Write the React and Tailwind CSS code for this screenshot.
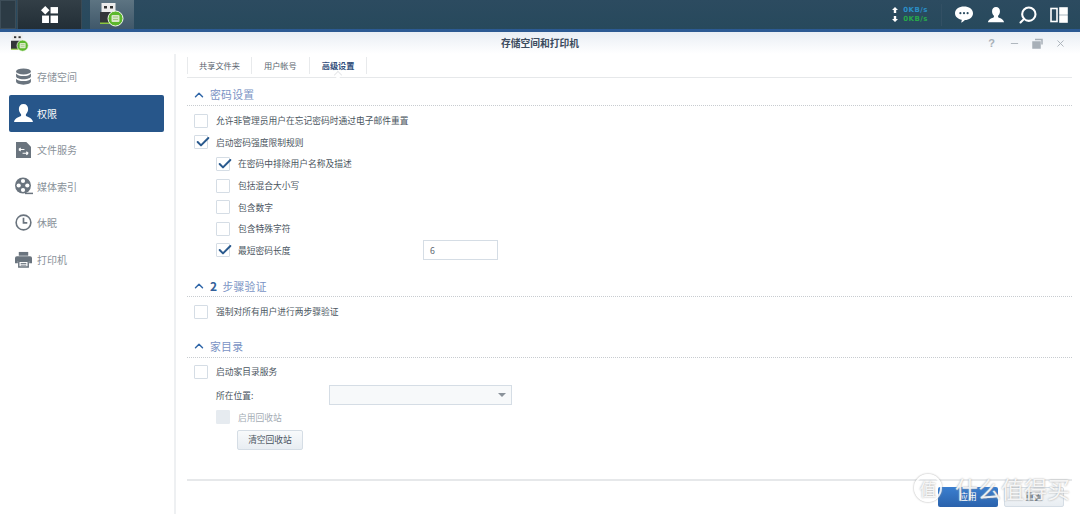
import { Check, ChevronUp, Minus, X, Search } from 'lucide-react'

const font = { fontFamily: '"Noto Sans CJK SC", "Noto Sans", sans-serif' }

function UsbIcon({ small }) {
  const cls = small ? 'w-[18px] h-[18px]' : 'w-[24px] h-[24px]'
  return (
    <svg viewBox="0 0 24 24" className={cls}>
      <rect x="1.500" y="0" width="14" height="9" fill="#ececec" />
      <rect x="4" y="3" width="3" height="2.500" fill="#333" />
      <rect x="10" y="3" width="3" height="2.500" fill="#333" />
      <rect x="0" y="9" width="16" height="11" fill="#33363a" />
      <rect x="0" y="19.500" width="16" height="1.500" fill="#8cc63f" />
      <circle cx="15.500" cy="15.500" r="7.500" fill="#5cb82c" stroke="#f4f8ef" strokeWidth="1" />
      <rect x="11.500" y="12" width="8" height="7" rx="1" fill="#d9e8c8" />
      <path d="M13 14h5M13 16.500h5" stroke="#8fbf6a" strokeWidth="0.800" />
    </svg>
  )
}

function Disk({ className }) {
  return (
    <svg viewBox="0 0 16 16" className={className} fill="currentColor">
      <ellipse cx="8" cy="3.200" rx="7" ry="2.800" />
      <path d="M1 5.200c1 1.600 3.600 2.400 7 2.400s6-.8 7-2.400v2.600c0 1.500-3 2.800-7 2.800s-7-1.300-7-2.800z" />
      <path d="M1 10c1 1.600 3.600 2.300 7 2.300s6-.7 7-2.300v2.800c0 1.500-3 2.900-7 2.900s-7-1.400-7-2.900z" />
    </svg>
  )
}

function Person({ className }) {
  return (
    <svg viewBox="0 0 20 20" className={className} fill="currentColor">
      <path d="M10 1c2.800 0 4.400 2 4.400 4.800 0 2.200-1 4-2.100 5v1.600c1.600.9 6.200 1.800 6.700 5.600H1c.5-3.800 5.100-4.700 6.700-5.600v-1.600c-1.100-1-2.100-2.800-2.100-5C5.600 3 7.200 1 10 1z" />
    </svg>
  )
}

function FileSvc({ className }) {
  return (
    <svg viewBox="0 0 16 18" className={className}>
      <path d="M0 1h11l5 5v12H0z" fill="currentColor" />
      <path d="M3 9h6M3 9l2-1.500M3 9l2 1.500M13 13H7M13 13l-2-1.500M13 13l-2 1.500" stroke="#fff" strokeWidth="1.300" fill="none" />
    </svg>
  )
}

function Reel({ className }) {
  return (
    <svg viewBox="0 0 18 18" className={className}>
      <circle cx="8" cy="8.500" r="8" fill="currentColor" />
      <circle cx="8" cy="4" r="2.100" fill="#fff" />
      <circle cx="8" cy="13" r="2.100" fill="#fff" />
      <circle cx="3.700" cy="8.500" r="2.100" fill="#fff" />
      <circle cx="12.300" cy="8.500" r="2.100" fill="#fff" />
      <path d="M10 16.400h8" stroke="currentColor" strokeWidth="1.500" />
    </svg>
  )
}

function Clock({ className }) {
  return (
    <svg viewBox="0 0 18 18" className={className} fill="none" stroke="currentColor">
      <circle cx="9" cy="9" r="7.800" strokeWidth="1.700" />
      <path d="M9 4v5.500h4" strokeWidth="1.800" />
    </svg>
  )
}

function Printer({ className }) {
  return (
    <svg viewBox="0 0 18 18" className={className}>
      <path d="M4 1h10v4H4z" fill="currentColor" />
      <path d="M2 5.500h14a2 2 0 0 1 2 2V13h-3v-2.500H3V13H0V7.500a2 2 0 0 1 2-2z" fill="currentColor" />
      <path d="M4 11h10v6H4z" fill="none" stroke="currentColor" strokeWidth="1.500" />
      <path d="M6 13.200h6M6 15h6" stroke="currentColor" />
    </svg>
  )
}

function Arrow({ down }) {
  return (
    <svg viewBox="0 0 6 6" className={`w-[6px] h-[6px] mr-[5px] ${down ? 'rotate-180' : ''}`} fill="#fff">
      <path d="M3 0l3 3H4.200v3H1.800V3H0z" />
    </svg>
  )
}

const menu = [
  ['存储空间', Disk, 'w-[17px] h-[17px]'],
  ['权限', Person, 'w-[21px] h-[21px]'],
  ['文件服务', FileSvc, 'w-[15px] h-[17px]'],
  ['媒体索引', Reel, 'w-[18px] h-[18px]'],
  ['休眠', Clock, 'w-[17px] h-[17px]'],
  ['打印机', Printer, 'w-[17px] h-[17px]'],
]

function Box({ checked, disabled }) {
  return (
    <span className={`relative w-[14px] h-[14px] shrink-0 border rounded-[1px] ${disabled ? 'bg-[#e6ebf0] border-[#e6ebf0]' : 'bg-white border-[#d5dde5]'}`}>
      {checked && <Check size={16} strokeWidth={3} className="absolute -top-[2px] left-0 text-[#2a5a8e]" />}
    </span>
  )
}

function Row({ label, checked, sub, disabled }) {
  return (
    <div className={`h-[21.6px] flex items-center gap-2 ${sub ? 'pl-[22px]' : ''}`}>
      <Box checked={checked} disabled={disabled} />
      <span className={disabled ? 'text-[#a4acb4]' : 'text-[#4a5560]'}>{label}</span>
    </div>
  )
}

function SectionHead({ children }) {
  return (
    <div className="h-[22px] flex items-center gap-[4px] pl-[5px] border-b border-dotted border-[#c8ccd0]">
      <ChevronUp size={14} strokeWidth={2.500} className="text-[#2f66a8]" />
      <span className="text-[10.8px] text-[#7a93c4] tracking-[0.3px]">{children}</span>
    </div>
  )
}

export default function App() {
  return (
    <div style={font} className="relative w-[1080px] h-[514px] overflow-hidden bg-white flex flex-col">
      {/* taskbar */}
      <div className="h-[32px] shrink-0 flex items-stretch bg-gradient-to-b from-[#2c4b60] to-[#27495c] border-b-[3px] border-[#2c5a93]">
        <div className="w-[16px] bg-[#2c3b45] border border-[#3d4d58]" />
        <div className="w-[65px] ml-px bg-gradient-to-b from-[#333f47] to-[#222e36] border-x border-[#3a4a55] flex items-center justify-center">
          <svg viewBox="0 0 16 16" className="w-[17px] h-[17px]" fill="#fff">
            <path d="M4 0l4 4-4 4-4-4z" />
            <rect x="9" y="1" width="7" height="6" />
            <rect x="1" y="9" width="6.500" height="7" />
            <rect x="9" y="9" width="7" height="7" />
          </svg>
        </div>
        <div className="w-[44px] ml-[8px] bg-gradient-to-b from-[#5d7482] to-[#40586a] flex items-center justify-center">
          <UsbIcon />
        </div>
        <div className="ml-auto flex items-center text-white">
          <div className="flex flex-col text-[7px] leading-[9px] font-bold tracking-[0.5px] mr-[13px]" style={{ fontFamily: '"DejaVu Sans", sans-serif' }}>
            <span className="flex items-center text-[#2a8fc8]"><Arrow />0KB/s</span>
            <span className="flex items-center text-[#27a84a]"><Arrow down />0KB/s</span>
          </div>
          <div className="w-px h-[22px] bg-[#335064] mr-[13px]" />
          <svg viewBox="0 0 20 18" className="w-[18px] h-[17px] mr-[14px]" fill="#fff">
            <path d="M10 0c5.500 0 10 3 10 7.500S15.500 15 11 15c-1 1.300-2.500 2.500-4.500 3 .8-1 1-2 1-3.300C3.500 14 0 11.500 0 7.500 0 3 4.500 0 10 0z" />
            <circle cx="6" cy="7.500" r="1.200" fill="#2b4b60" />
            <circle cx="10" cy="7.500" r="1.200" fill="#2b4b60" />
            <circle cx="14" cy="7.500" r="1.200" fill="#2b4b60" />
          </svg>
          <Person className="w-[18px] h-[18px] mr-[13px]" />
          <Search size={20} strokeWidth={2.500} className="mr-[12px] -scale-x-100" />
          <svg viewBox="0 0 18 16" className="w-[18px] h-[16px] mr-[12px]" fill="none" stroke="#fff" strokeWidth="1.600">
            <rect x="1" y="1.500" width="6" height="13" />
            <rect x="10" y="1" width="7" height="6" fill="#fff" />
            <rect x="10" y="9" width="7" height="6" fill="#fff" />
          </svg>
        </div>
      </div>

      {/* window title */}
      <div className="relative h-[22px] shrink-0 flex items-center justify-center bg-gradient-to-b from-[#e9eef4] to-white">
        <span className="absolute left-[11px] top-[2px]"><UsbIcon small /></span>
        <span className="text-[9.75px] font-bold text-[#3b4b5e]">存储空间和打印机</span>
        <div className="absolute right-[14px] top-[6px] flex items-center gap-[12px] text-[#a8b0b8]">
          <span className="w-[11px] text-[11px] leading-[11px] font-bold text-center" style={{ fontFamily: '"Liberation Sans", sans-serif' }}>?</span>
          <Minus size={11} strokeWidth={2} />
          <svg viewBox="0 0 11 11" className="w-[11px] h-[11px]" fill="none" stroke="currentColor" strokeWidth="1.500">
            <rect x="1" y="4" width="7" height="6" fill="currentColor" />
            <path d="M3 1.500h7v5" />
          </svg>
          <X size={11} strokeWidth={2} />
        </div>
      </div>

      <div className="flex-1 flex min-h-0">
        {/* sidebar */}
        <div className="w-[176px] shrink-0 border-r-2 border-[#eef0f2] pl-[9px] pr-[10px] pt-[4.5px]">
          {menu.map(([label, Icon, cls]) => {
            const active = label === '权限'
            return (
              <div key={label} className={`h-[36.5px] flex items-center rounded-[2px] ${active ? 'bg-[#27568a] text-white' : 'text-[#6a747e]'}`}>
                <span className="w-[28px] flex justify-center shrink-0 pl-px">
                  <Icon className={cls} />
                </span>
                <span className={`text-[10px] ${active ? 'text-white' : 'text-[#8a929a]'}`}>{label}</span>
              </div>
            )
          })}
        </div>

        {/* main */}
        <div className="flex-1 min-w-0 flex flex-col pl-[11px] pr-[8px] text-[8.75px]">
          <div className="relative h-[24px] shrink-0 flex items-center border-b border-[#e6e8ea] text-[8.2px] text-[#5a646e]">
            <span className="h-[17px] flex items-center px-[11px] border-l border-[#e8eaec]">共享文件夹</span>
            <span className="h-[17px] flex items-center px-[12px] border-l border-[#e8eaec]">用户帐号</span>
            <span className="relative h-[17px] flex items-center px-[12px] border-x border-[#e8eaec] font-bold text-[#33507c]">
              高级设置
              {/* notch under the active tab */}
              <span className="absolute left-1/2 -bottom-[4px] w-[6px] h-[6px] -ml-[3px] rotate-45 bg-white border-l border-t border-[#e6e8ea]" />
            </span>
          </div>

          <div className="h-[6px]" />
          <SectionHead>密码设置</SectionHead>
          <div className="pl-[7px] pt-[4px]">
            <Row label="允许非管理员用户在忘记密码时通过电子邮件重置" />
            <Row label="启动密码强度限制规则" checked />
            <Row label="在密码中排除用户名称及描述" checked sub />
            <Row label="包括混合大小写" sub />
            <Row label="包含数字" sub />
            <Row label="包含特殊字符" sub />
            <div className="flex items-center">
              <div className="w-[229px]"><Row label="最短密码长度" checked sub /></div>
              <div className="w-[75px] h-[20px] border border-[#d5dde5] flex items-center pl-[6px] text-[#5a646e]">6</div>
            </div>
          </div>

          <div className="h-[14px]" />
          <SectionHead><span className="text-[12px] font-bold text-[#33609a] mr-[5px]">2</span>步骤验证</SectionHead>
          <div className="pl-[7px] pt-[4px]">
            <Row label="强制对所有用户进行两步骤验证" />
          </div>

          <div className="h-[13px]" />
          <SectionHead>家目录</SectionHead>
          <div className="pl-[7px] pt-[3px]">
            <Row label="启动家目录服务" />
            <div className="h-[26px] flex items-center pl-[22px] text-[#4a5560]">
              <span className="w-[113px]">所在位置:</span>
              <div className="w-[183px] h-[20px] border border-[#d5dde5] bg-[#f7f9fa] flex items-center justify-end pr-[5px]">
                <span className="w-0 h-0 border-x-[4px] border-x-transparent border-t-[4px] border-t-[#8a929a]" />
              </div>
            </div>
            <div className="-mt-[2px]"><Row label="启用回收站" sub disabled /></div>
            <div className="pl-[43px] pt-[2px]">
              <div className="w-[66px] h-[20px] flex items-center justify-center rounded-[2px] border border-[#d5dde5] bg-gradient-to-b from-[#f8fafb] to-[#e8edf2] text-[#4a5560]">清空回收站</div>
            </div>
          </div>

          <div className="mt-auto h-[34px] shrink-0 border-t-2 border-[#e6e8ea] flex items-start justify-end gap-[6px] pt-[6px] pr-[8px] mb-[1px]">
            <div className="w-[60px] h-[20px] flex items-center justify-center rounded-[2px] bg-gradient-to-b from-[#3a7fd0] to-[#2a62ac] text-white">应用</div>
            <div className="w-[60px] h-[20px] flex items-center justify-center rounded-[2px] border border-[#d5dde5] bg-gradient-to-b from-[#f8fafb] to-[#e8edf2] text-[#4a5560]">重置</div>
          </div>
        </div>
      </div>

      {/* watermark */}
      <div className="absolute left-[914px] top-[474px] flex items-center text-white/85 pointer-events-none [text-shadow:0_0_2px_#9a9a9a]">
        <span className="w-[28px] h-[28px] rounded-full border-2 border-white/85 shadow-[0_0_2px_#9a9a9a] flex items-center justify-center text-[17px] leading-none">值</span>
        <span className="ml-[13px] text-[23px] leading-none">什么值得买</span>
      </div>
    </div>
  )
}
